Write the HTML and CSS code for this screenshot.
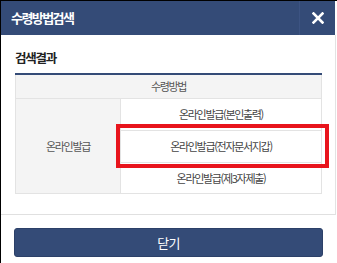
FILE: index.html
```html
<!DOCTYPE html>
<html lang="ko">
<head>
<meta charset="utf-8">
<link rel="stylesheet" href="styles.css">
</head>
<body>
<div class="popup">
  <div class="header">
    <h1 class="title">수령방법검색</h1>
    <button class="close" aria-label="닫기">
      <svg width="12" height="12" viewBox="0 0 12 12"><path d="M1.5 1.5L10.5 10.5M10.5 1.5L1.5 10.5" stroke="#fff" stroke-width="2.6" stroke-linecap="square"/></svg>
    </button>
  </div>
  <div class="content">
    <h2 class="section-title">검색결과</h2>
    <div class="table-wrap">
      <table class="result">
        <thead>
          <tr><th colspan="2" class="head">수령방법</th></tr>
        </thead>
        <tbody>
          <tr><th rowspan="3" class="label">온라인발급</th><td>온라인발급(본인출력)</td></tr>
          <tr><td>온라인발급(전자문서지갑)</td></tr>
          <tr class="last"><td>온라인발급(제3자제출)</td></tr>
        </tbody>
      </table>
      <div class="highlight"></div>
    </div>
  </div>
  <div class="footer">
    <button class="btn-close">닫기</button>
  </div>
</div>
</body>
</html>
```

FILE: styles.css
```css
* { box-sizing: border-box; }
body {
  margin: 0;
  background: #000;
  font-family: "Noto Sans CJK KR", "Noto Sans", sans-serif;
}
.popup {
  margin: 1px 0 0 1px;
  width: 336px;
  height: 262px;
  background: #fff;
}
.header {
  width: 334px;
  height: 34px;
  background: #344b77;
  display: flex;
  align-items: center;
}
.title {
  margin: 0;
  padding-left: 10px;
  color: #fff;
  font-size: 13px;
  font-weight: 700;
  letter-spacing: -0.12em;
  line-height: 20px;
}
.close {
  margin-left: auto;
  width: 36px;
  height: 34px;
  border: 0;
  border-left: 1px solid #3c5382;
  background: transparent;
  display: flex;
  align-items: center;
  justify-content: center;
  padding: 0;
}
.content {
  width: 335px;
  height: 180px;
  border-right: 1px solid #e3e3e3;
  border-bottom: 1px solid #e0e0e0;
  padding: 13px 0 0 14px;
}
.section-title {
  margin: 0 0 5px;
  font-size: 12.5px;
  font-weight: 700;
  color: #222;
  line-height: 20px;
  letter-spacing: -0.1em;
}
.table-wrap {
  position: relative;
  width: 307px;
}
.result {
  width: 307px;
  border-collapse: collapse;
  border: 1px solid #e3e3e3;
  border-top: 2px solid #344b77;
  font-size: 11px;
  letter-spacing: -0.12em;
  color: #444;
}
.result th, .result td {
  border: 1px solid #e3e3e3;
  padding: 0;
  text-align: center;
  font-weight: 400;
}
.result .head {
  height: 24px;
  background: #f4f4f4;
  color: #555;
}
.result .label {
  width: 105px;
  background: #f4f4f4;
  color: #555;
}
.result td {
  height: 32px;
  background: #fff;
}
.result .last td { height: 31px; }
.highlight {
  position: absolute;
  left: 101px;
  top: 51px;
  width: 213px;
  height: 44px;
  border: 4px solid #e8141c;
}
.footer {
  padding: 13px 0 0 13px;
}
.btn-close {
  width: 309px;
  height: 29px;
  background: #344b77;
  border: 1px solid #2c4068;
  border-radius: 3px;
  color: #fff;
  font-family: inherit;
  font-size: 13px;
  letter-spacing: -0.05em;
  padding: 0;
}
```
